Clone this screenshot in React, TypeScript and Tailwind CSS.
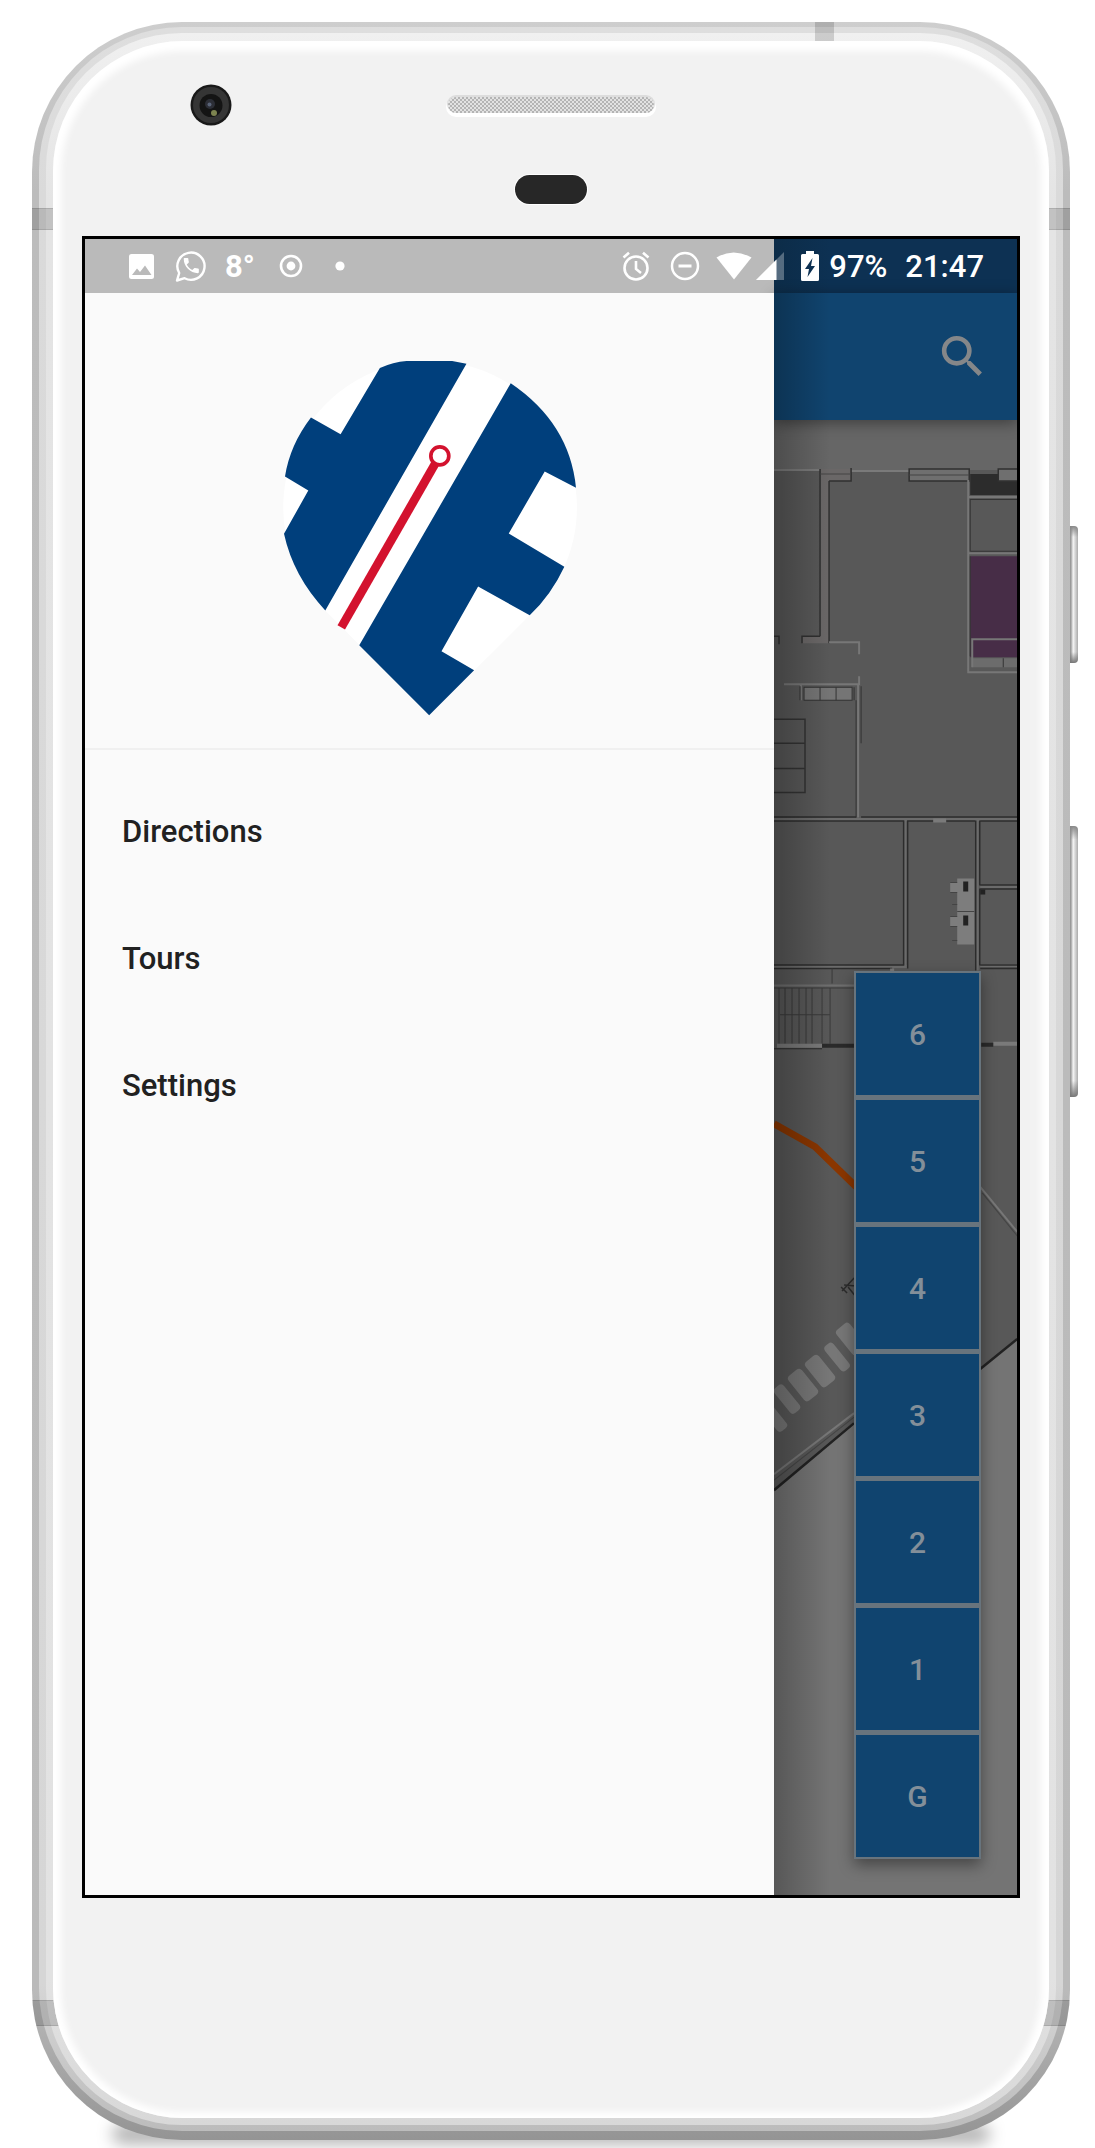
import React from "react";

const floors = ["6", "5", "4", "3", "2", "1", "G"];
const menu = ["Directions", "Tours", "Settings"];

function WhatsAppIcon() {
  return (
    <svg viewBox="0 0 32 32" className="ml-5 size-8" fill="none" aria-hidden="true">
      <path d="M2 30.5 4.2 23A13.6 13.6 0 1 1 9.6 28.2Z" stroke="#fff" strokeWidth="2.4" strokeLinejoin="round" />
      <path
        transform="translate(6.2 5.5) scale(.84)"
        fill="#fff"
        d="M6.62 10.79c1.44 2.83 3.76 5.14 6.59 6.59l2.2-2.2c.27-.27.67-.36 1.02-.24 1.12.37 2.33.57 3.57.57.55 0 1 .45 1 1V20c0 .55-.45 1-1 1-9.39 0-17-7.61-17-17 0-.55.45-1 1-1h3.5c.55 0 1 .45 1 1 0 1.25.2 2.45.57 3.57.11.35.03.74-.25 1.02l-2.2 2.2z"
      />
    </svg>
  );
}

function StatusBar() {
  return (
    <div className="flex h-[54px] shrink-0 items-center bg-[linear-gradient(90deg,#bababa_73.9%,#0c2c48_73.9%,#0d3153_80%)] pr-[33px] pl-[43px] text-[31px] leading-none font-medium text-white">
      <svg viewBox="0 0 27 27" className="size-[27px]" aria-hidden="true">
        <rect x="1" y="1" width="25" height="25" rx="2.5" fill="#fff" />
        <path d="M4 22 9 15.500l3 3.500 5-6.500 6.500 9.500Z" fill="#bababa" />
      </svg>
      <WhatsAppIcon />
      <span className="ml-[18px] font-bold">8°</span>
      <svg viewBox="0 0 34 34" className="ml-[19px] size-[34px]" aria-hidden="true">
        <circle cx="17" cy="17" r="10" fill="none" stroke="#fff" strokeWidth="2.6" />
        <circle cx="17" cy="17" r="4.4" fill="#fff" />
      </svg>
      <svg viewBox="0 0 24 24" className="ml-5 size-6" aria-hidden="true">
        <circle cx="12" cy="12" r="4.6" fill="#fff" />
      </svg>
      <div className="ml-auto flex items-center">
        <svg viewBox="0 0 28 30" className="h-[30px] w-7" fill="none" stroke="#fff" strokeWidth="2.6" aria-hidden="true">
          <circle cx="14" cy="17" r="11.5" />
          <path d="M14 10v8l5 4M1.5 6.5 7 1.8M26.500 6.5 21 1.800" />
        </svg>
        <svg viewBox="0 0 30 30" className="ml-5 size-[30px]" fill="none" stroke="#fff" strokeWidth="2.5" aria-hidden="true">
          <circle cx="15" cy="15" r="13" />
          <path d="M8.500 15h13" strokeWidth="3" />
        </svg>
        <svg viewBox="0 0 36 28" className="ml-4 h-7 w-9" fill="#fff" aria-hidden="true">
          <path d="M.5 5.500Q17.500-4.500 35.500 5.500L18 27.500Z" />
        </svg>
        <svg viewBox="0 0 28 28" className="ml-1 size-7" aria-hidden="true">
          <path d="M28 0v28H0Z" fill="#fff" fillOpacity=".3" />
          <path d="M20.500 7.500V28H0Z" fill="#fff" />
        </svg>
        <svg viewBox="0 0 18 30" className="ml-[17px] h-[30px] w-[18px]" aria-hidden="true">
          <path d="M5 0h8v3h3.500Q18 3 18 4.500v24Q18 30 16.500 30h-15Q0 30 0 28.500v-24Q0 3 1.500 3H5Z" fill="#fff" />
          <path d="M11.500 7 4 18h4L6.500 26 14 15h-4Z" fill="#0d3153" />
        </svg>
        <span className="ml-2.5">97%</span>
        <time className="ml-[18px]">21:47</time>
      </div>
    </div>
  );
}

function Logo() {
  return (
    <svg viewBox="96 90 886 1069" className="mx-auto w-[295px]" role="img" aria-label="Map pin logo">
      <path d="M540 92A441 441 0 0 1 840 857L538 1157 226 842A441 441 0 0 1 540 92Z" fill="#fff" />
      <path d="M390 114Q430 96 470 93L607 93 650 101 226 842Q130 740 102 612L175 482 105 440Q120 345 183 263L272 313Z" fill="#003f7c" />
      <path d="M783 160Q960 280 979 474L885 425 777 611 944 711Q905 795 840 857L685 770 575 965 673 1022 538 1157 328 947Z" fill="#003f7c" />
      <path d="M557 400 274 893" stroke="#d3122e" strokeWidth="26" />
      <circle cx="570" cy="378" r="27" fill="#fff" stroke="#d3122e" strokeWidth="11" />
    </svg>
  );
}

function FloorPlan() {
  const treads = [
    [774, 1416, 12],
    [787, 1398, 12],
    [803, 1384, 17],
    [820, 1370, 17],
    [837, 1356, 11],
    [851, 1338, 17],
  ];
  return (
    <svg
      viewBox="774 420 243 1475"
      preserveAspectRatio="xMinYMin slice"
      className="absolute inset-0 h-full w-full"
      fill="none"
      aria-hidden="true"
    >
      <path d="M774 420h243v1475H774Z" fill="#747474" />
      <path d="M774 420h243v50H774Z" fill="#666" />
      <path d="M774 470H1017V1338L774 1489Z" fill="#585858" />
      <path d="M774 1489 854 1421 980 1368V1895H774Z" fill="#747474" />
      <path d="M980 1300h37v38l-37 30Z" fill="#585858" />

      <path d="M774 470h46M851 471h58" stroke="#7a7a7a" strokeWidth="2" />
      <path d="M820 469h31v12h-22v162h-27v-7h18Z" fill="#6a6767" />
      <path d="M820 469v167M802 643v-7h18M829 481v162M851 468v13h-22M774 636h5v8" stroke="#303030" strokeWidth="1.5" />
      <path d="M820 474h31M910 474h58" stroke="#444" />
      <path d="M909 469h60v12h-60Z" fill="#6f6f6f" stroke="#303030" strokeWidth="1.5" />
      <path d="M909 475h60" stroke="#444" />
      <path d="M970 474h47v21h-47Z" fill="#2c2c2c" />
      <path d="M998 469h21v12h-21Z" fill="#6f6f6f" stroke="#303030" strokeWidth="1.5" />
      <path d="M970 556h47v101h-47Z" fill="#472d47" />
      <path d="M972 658h45v9h-45Z" fill="#6c6c6c" />
      <path d="M968 480v192h49M968 497h49M968 553h49M972 667v-28h45" stroke="#777" strokeWidth="2" />
      <path d="M970 499v52M970 499.500h47M970 551h47M970 556v100M1003 658v9" stroke="#333" />

      <path d="M829 642h30v12M859 676v9M784 684h75M801 684v16M858 684v133" stroke="#777" strokeWidth="2" />
      <path d="M804 687h48v13h-48Z" fill="#757575" stroke="#333" />
      <path d="M820 687v13M836 687v13M800 686v14M854 687v13M856 700v117M861 686v57" stroke="#333" />
      <path d="M774 719h31v73h-31M774 743h31M774 768h31" stroke="#333" strokeWidth="1.5" />

      <path d="M774 819h243M905 820v147M977 820v150M774 966h133M980 886h37M980 965h37" stroke="#6b6b6b" strokeWidth="3" />
      <path
        d="M774 816.500h82M861 816.500h156M774 820.500h130M907 820.500h68M980 820.500h37M903.500 820v145M907.500 820v148M975.500 820v150M979.500 820v65M979.500 888v77M980 884.500h37M980 888.500h37M774 964.500h130M774 968h118M980 964.500h37M980 968h37"
        stroke="#2c2c2c"
        strokeWidth="1.5"
      />
      <path d="M933 820h13M892 968v4" stroke="#7a7a7a" strokeWidth="4" />
      <path d="M980 889h5v5h-5Z" fill="#222" />
      <path d="M957 878h17v66h-17ZM950 882h7v10h-7ZM950 916h7v10h-7Z" fill="#7d7d7d" />
      <path d="M957 911h17M950 882h7M950 892h7M950 916h7M950 926h7M952 904h5M952 940h5" stroke="#444" />
      <path d="M963 881h5v10h-5ZM963 915h5v10h-5Z" fill="#222" />

      <path d="M774 985h81" stroke="#6e6e6e" strokeWidth="2" />
      <path d="M832 968v15M774 987.500h81M779 988v55M785 988v55M792 988v55M799 988v55M806 988v55M812 988v55M822 988v55M830 988v55M780 1014h50" stroke="#3a3a3a" />
      <path d="M777 1045h45M993 1043h24" stroke="#7a7a7a" strokeWidth="4" />
      <path d="M822 1045h33M981 1044h12" stroke="#2a2a2a" strokeWidth="4" />
      <path d="M774 1048h48" stroke="#2a2a2a" />

      <path d="M774 1123 815 1146 856 1186" stroke="#8a3600" strokeWidth="7" />
      <path d="M980 1186 1017 1231" stroke="#777" strokeWidth="2" />
      <path d="M982 1192 1017 1235" stroke="#444" />
      <path d="m842 1290 12-13M844 1284l12 1M848 1286l8 10M841 1286l6 6" stroke="#2c2c2c" strokeWidth="1.5" />

      {treads.map(([x, y, h]) => (
        <rect key={x} x={x - 16} y={y - h / 2} width="32" height={h} rx="4" fill="#777" transform={`rotate(51 ${x} ${y})`} />
      ))}
      <path d="M774 1473 854 1412" stroke="#777" strokeWidth="2" />
      <path d="M774 1479 854 1416" stroke="#444" />
      <path d="M774 1489 854 1422M980 1368 1017 1338" stroke="#222" strokeWidth="2.500" />
    </svg>
  );
}

function Screen() {
  return (
    <div className="flex aspect-[938/1662] flex-col overflow-hidden border-[3px] border-black">
      <StatusBar />
      <div className="flex flex-1">
        <aside className="z-20 w-[73.9%] bg-[#fafafa]">
          <div className="border-b-2 border-[#f0f0f0] pt-[67px] pb-8">
            <Logo />
          </div>
          <nav className="flex flex-col pt-[19px]" aria-label="Main">
            {menu.map((item) => (
              <a key={item} href="#" className="flex h-[127px] items-center px-[37px] text-[31px] font-medium text-[#212121]">
                {item}
              </a>
            ))}
          </nav>
        </aside>
        <main className="relative flex flex-1 flex-col">
          <header className="z-10 flex h-[127px] items-center justify-end bg-[#10446f] pr-[27px] shadow-[0_3px_14px_rgba(0,0,0,0.4)]">
            <button type="button" aria-label="Search" className="text-[#858789]">
              <svg viewBox="0 0 24 24" className="size-[55px]" fill="currentColor" aria-hidden="true">
                <path d="M15.500 14h-.79l-.28-.27A6.471 6.471 0 0 0 16 9.500 6.500 6.500 0 1 0 9.500 16c1.610 0 3.090-.59 4.230-1.570l.27.28v.79l5 4.990L20.490 19l-4.990-5zm-6 0C7.010 14 5 11.990 5 9.500S7.010 5 9.500 5 14 7.010 14 9.500 11.990 14 9.500 14z" />
              </svg>
            </button>
          </header>
          <div className="relative flex flex-1 items-end justify-end pr-9 pb-9">
            <FloorPlan />
            <div className="relative flex flex-col gap-[5px] border-2 border-[#68747d] bg-[#68747d] shadow-[0_6px_14px_rgba(0,0,0,0.4)]">
              {floors.map((floor) => (
                <button key={floor} type="button" className="h-[122px] w-[123px] bg-[#10446f] text-[30px] font-medium text-[#838f99]">
                  {floor}
                </button>
              ))}
            </div>
          </div>
          <div className="pointer-events-none absolute inset-y-0 left-0 z-20 w-14 bg-linear-to-r from-black/25 to-transparent" />
        </main>
      </div>
    </div>
  );
}

function Camera() {
  return (
    <svg viewBox="0 0 42 42" className="absolute top-0 left-[108px] size-[42px]" aria-hidden="true">
      <circle cx="21" cy="21" r="20.500" fill="#191919" />
      <circle cx="21" cy="21" r="18" fill="#353535" />
      <circle cx="21" cy="21.500" r="11.500" fill="#141414" />
      <circle cx="20" cy="20" r="5" fill="#2c2e36" />
      <circle cx="19.500" cy="20.500" r="2" fill="#596377" />
      <circle cx="24" cy="29" r="3" fill="#7d8450" />
    </svg>
  );
}

export default function App() {
  return (
    <div className="overflow-hidden bg-white pt-[22px] pr-[25px] pb-2 pl-8 font-[Roboto,sans-serif]">
      <div className="relative">
        <div className="absolute right-20 -bottom-1 left-20 h-5 rounded-full bg-black/30 blur-[8px]" />
        <div className="absolute top-[504px] -right-2 h-[137px] w-3 rounded-r-sm bg-[linear-gradient(#888,#fff0_8%,#fff0_92%,#777),linear-gradient(90deg,#999_40%,#f5f5f5_60%,#aaa)]" />
        <div className="absolute top-[804px] -right-2 h-[271px] w-3 rounded-r-sm bg-[linear-gradient(#888,#fff0_5%,#fff0_94%,#777),linear-gradient(90deg,#999_40%,#f5f5f5_60%,#aaa)]" />
        <div className="relative overflow-hidden rounded-[150px] bg-[linear-gradient(#cecece,#bcbcbc_8%,#bababa_93%,#949494)] px-[21px] pt-[19px] pb-[22px]">
          <div className="absolute inset-x-[7px] top-[5px] bottom-[9px] rounded-[143px] bg-[linear-gradient(#dedede,#dadada_8%,#d6d6d6_93%,#bcbcbc)]" />
          <div className="absolute inset-x-[14px] top-[11px] bottom-[15px] rounded-[136px] bg-[linear-gradient(#f0f0f0,#e4e4e4_8%,#e2e2e2_93%,#d8d8d8)]" />
          <div className="absolute top-0 right-[236px] h-8 w-[19px] bg-black/15" />
          <div className="absolute top-[186px] left-0 h-[22px] w-8 border-y border-black/10 bg-black/15" />
          <div className="absolute top-[186px] right-0 h-[22px] w-8 border-y border-black/10 bg-black/15" />
          <div className="absolute bottom-[114px] left-0 h-[26px] w-8 border-y border-black/10 bg-black/15" />
          <div className="absolute right-0 bottom-[114px] h-[26px] w-8 border-y border-black/10 bg-black/15" />
          <div className="relative rounded-[130px] bg-[#f2f2f2] px-[29px] pt-[43px] pb-[220px] shadow-[inset_0_2px_7px_8px_#fff]">
            <div className="relative flex h-[42px] items-center justify-center">
              <Camera />
              <div className="h-4 w-[206px] rounded-full bg-[repeating-conic-gradient(#b4b4b4_0_25%,#e2e2e2_0_50%)] bg-size-[4px_4px] shadow-[0_-1px_0_1px_#ddd,0_2px_0_2px_#fff]" />
            </div>
            <div className="mx-auto mt-[49px] mb-8 h-[29px] w-[72px] rounded-full bg-[#272727] shadow-[0_0_0_1px_#fff]" />
            <Screen />
          </div>
        </div>
      </div>
    </div>
  );
}
